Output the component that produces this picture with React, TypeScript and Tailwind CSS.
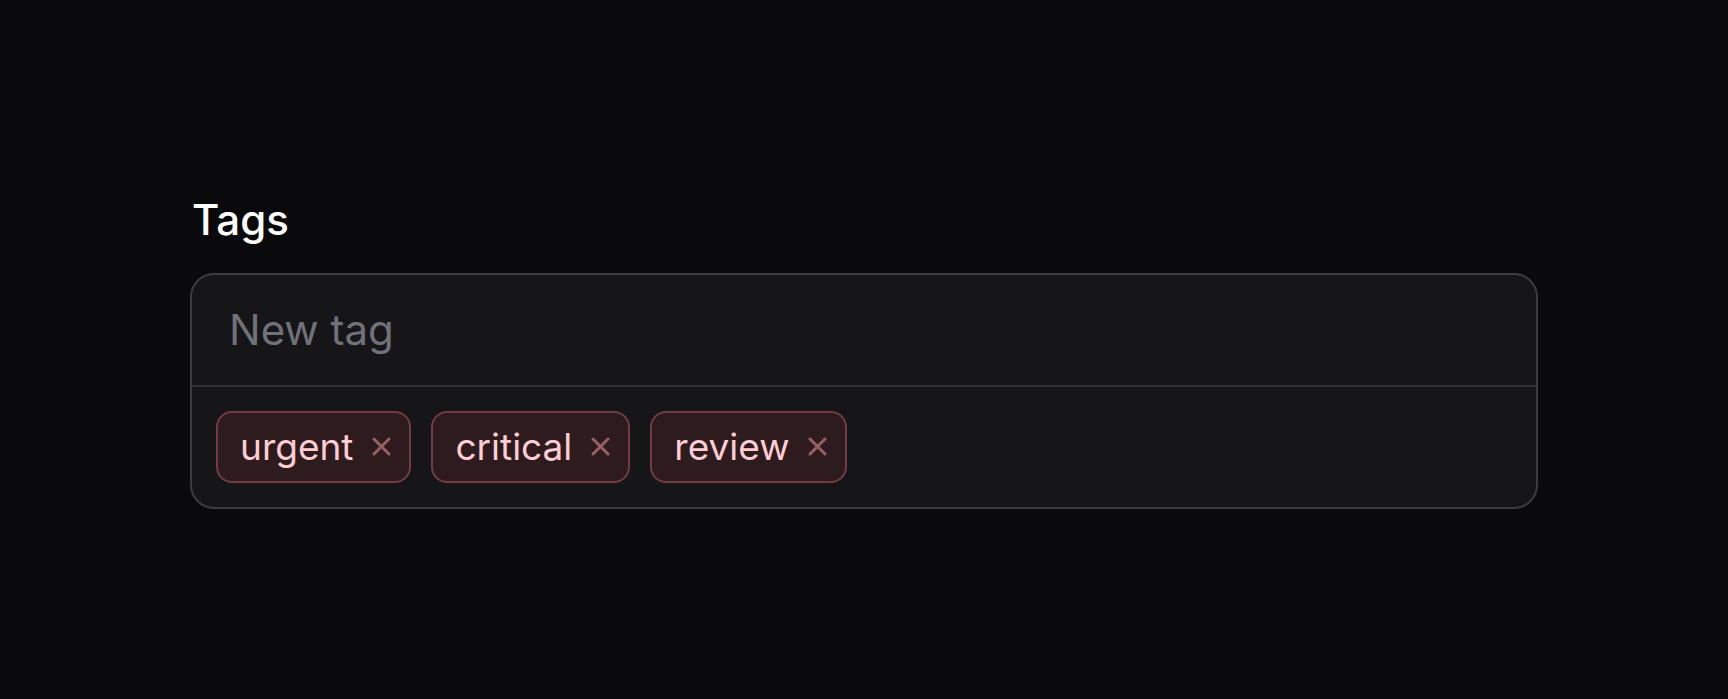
const tags = ["urgent", "critical", "review"];

function Cross() {
  return (
    <svg width="19" height="19" viewBox="0 0 19 19" className="text-[#9a5e65]">
      <path d="M2 2L17 17M17 2L2 17" stroke="currentColor" strokeWidth="3" strokeLinecap="round" />
    </svg>
  );
}

export default function App() {
  return (
    <div
      className="min-h-screen w-full bg-[#0a0a0c] flex items-center justify-center"
      style={{ fontFamily: "Inter, 'Noto Sans', sans-serif" }}
    >
      <div className="w-[1348px]">
        <label className="block text-[42px] leading-[58px] font-medium text-white mb-6 pl-[2px]">
          Tags
        </label>
        <div className="rounded-[24px] border-2 border-[#3c3c3f] bg-[#161618] overflow-hidden">
          <div className="h-[110px] flex items-center px-[37px]">
            <input
              className="w-full bg-transparent outline-none text-[42px] text-white placeholder:text-[#71717a]"
              placeholder="New tag"
            />
          </div>
          <div className="border-t-2 border-[#2f2f32] p-6 flex flex-wrap gap-5">
            {tags.map((t) => (
              <span
                key={t}
                className="h-[72px] flex items-center gap-[19px] pl-[22px] pr-[18px] rounded-[16px] border-2 border-[#723c43] bg-[#2d1b1e] text-[#fecdd3] text-[37px]"
              >
                {t}
                <Cross />
              </span>
            ))}
          </div>
        </div>
      </div>
    </div>
  );
}
